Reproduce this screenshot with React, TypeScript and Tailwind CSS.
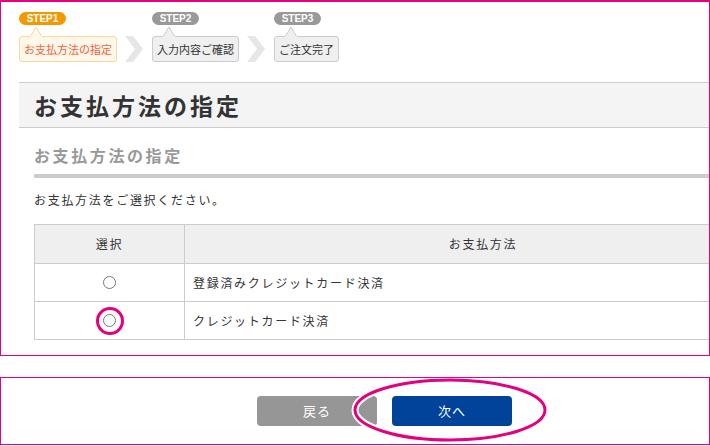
import React from 'react';

const font = { fontFamily: '"Noto Sans CJK JP", "Liberation Sans", sans-serif' };

const steps = [
  { no: 'STEP1', label: 'お支払方法の指定', active: true },
  { no: 'STEP2', label: '入力内容ご確認', active: false },
  { no: 'STEP3', label: 'ご注文完了', active: false },
];

const Chevron = () => (
  <svg width="18" height="26" viewBox="0 0 18 26" className="mt-[24px] shrink-0">
    <polygon points="0,0 8,0 18,13 8,26 0,26 10,13" fill="#e6e6e6" />
  </svg>
);

const StepItem = ({ no, label, active }: { no: string; label: string; active: boolean }) => (
  <div className="flex flex-col items-start">
    <span
      className={`w-[47px] h-[13px] rounded-full text-white text-[10px] font-bold leading-[13px] text-center ${
        active ? 'bg-[#f39800]' : 'bg-[#999999]'
      }`}
      style={{ fontFamily: '"Liberation Sans", Arial, sans-serif' }}
    >
      {no}
    </span>
    <div className="relative mt-[11px]">
      <svg width="14" height="12" viewBox="0 0 14 12" className="absolute left-[10px] -top-[10px]">
        <polygon
          points="1,11 7,1 13,11"
          fill={active ? '#fff7ea' : '#efefef'}
          stroke={active ? '#fcd79b' : '#cccccc'}
          strokeWidth="1"
        />
      </svg>
      <div
        className={`relative h-[26px] px-[4px] rounded-[3px] border text-[11px] leading-[24px] whitespace-nowrap ${
          active ? 'bg-[#fff7ea] border-[#fcd79b] text-[#f0643c]' : 'bg-[#efefef] border-[#cccccc] text-[#333333]'
        }`}
      >
        {label}
      </div>
      <div
        className={`absolute left-[11px] top-0 w-[12px] h-[1px] ${active ? 'bg-[#fff7ea]' : 'bg-[#efefef]'}`}
      ></div>
    </div>
  </div>
);

const Radio = () => (
  <span className="inline-block w-[13px] h-[13px] rounded-full border border-[#777777] bg-white"></span>
);

export default function App() {
  return (
    <div className="w-[710px] h-[446px] bg-white overflow-hidden relative text-[#333333]" style={font}>
      {/* main panel */}
      <div className="h-[356px] border border-t-2 border-[#e4007f] overflow-hidden">
        <div className="pl-[18px] pt-[10px] flex items-start">
          <StepItem {...steps[0]} />
          <div className="mx-[8px]">
            <Chevron />
          </div>
          <div className="ml-[1px]">
            <StepItem {...steps[1]} />
          </div>
          <div className="mx-[8px]">
            <Chevron />
          </div>
          <div className="ml-[1px]">
            <StepItem {...steps[2]} />
          </div>
        </div>

        <div className="ml-[18px] mt-[20px] w-[760px] h-[46px] bg-[#f4f4f4] border-y border-[#cccccc] flex items-center pl-[15px]">
          <h1 className="text-[23px] font-bold tracking-[3px] text-[#333333] leading-none">お支払方法の指定</h1>
        </div>

        <div className="ml-[33px] w-[760px]">
          <h2 className="mt-[17px] text-[16px] font-bold tracking-[2.6px] text-[#999999] leading-[20px]">お支払方法の指定</h2>
          <div className="mt-[9px] h-[4px] bg-[#cccccc]"></div>
          <p className="mt-[14px] text-[12px] tracking-[1.7px] leading-[16px]">お支払方法をご選択ください。</p>

          <table className="mt-[16px] w-[748px] border-collapse text-[12px] tracking-[1.7px]">
            <thead>
              <tr className="h-[39px] bg-[#efefef]">
                <th className="w-[150px] border border-[#cccccc] font-normal">選択</th>
                <th className="border border-[#cccccc] font-normal">お支払方法</th>
              </tr>
            </thead>
            <tbody>
              <tr className="h-[38px]">
                <td className="border border-[#cccccc] text-center align-middle">
                  <div className="flex justify-center">
                    <Radio />
                  </div>
                </td>
                <td className="border border-[#cccccc] pl-[8px]">登録済みクレジットカード決済</td>
              </tr>
              <tr className="h-[38px]">
                <td className="border border-[#cccccc] text-center align-middle">
                  <div className="flex justify-center">
                    <div className="relative flex items-center justify-center">
                      <Radio />
                      <span className="absolute w-[28px] h-[28px] rounded-full border-[3px] border-[#e4007f]"></span>
                    </div>
                  </div>
                </td>
                <td className="border border-[#cccccc] pl-[8px]">クレジットカード決済</td>
              </tr>
            </tbody>
          </table>
        </div>
      </div>

      {/* buttons panel */}
      <div className="relative mt-[21px] h-[68px] border border-[#e4007f] flex items-center pl-[256px] gap-[15px]">
        <button className="w-[120px] h-[30px] rounded-[4px] bg-[#969696] text-white text-[13px] tracking-[1px]">戻る</button>
        <button className="w-[120px] h-[30px] rounded-[4px] bg-[#00439b] text-white text-[13px] tracking-[1px]">次へ</button>
        <svg className="absolute left-[350px] top-0 pointer-events-none" width="200" height="66" viewBox="0 0 200 66">
          <ellipse cx="99" cy="32" rx="95" ry="30" fill="none" stroke="#ffffff" strokeWidth="7" />
          <ellipse cx="99" cy="32" rx="95" ry="30" fill="none" stroke="#e4007f" strokeWidth="3" />
        </svg>
      </div>
    </div>
  );
}
